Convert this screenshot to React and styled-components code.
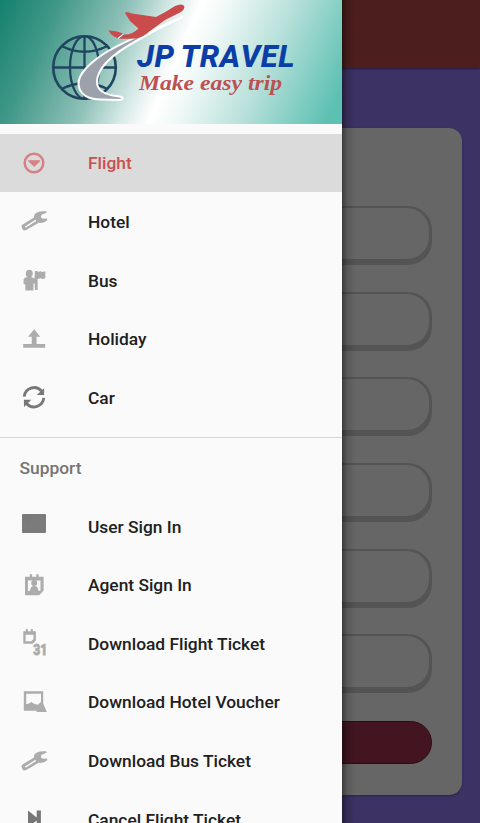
import React from 'react';
import styled, { createGlobalStyle } from 'styled-components';

const GlobalStyle = createGlobalStyle`
  * { box-sizing: border-box; }
  body { margin: 0; overflow: hidden; font-family: Roboto, "Liberation Sans", sans-serif; }
`;

const Screen = styled.div`
  position: relative;
  width: 480px;
  height: 823px;
  overflow: hidden;
  background: #3c3264;
`;

const AppBar = styled.header`
  height: 67.5px;
  background: #4c1e1e;
  box-shadow: 0 1px 2px rgba(30, 10, 40, 0.6);
`;

const SearchCard = styled.main`
  display: flex;
  flex-direction: column;
  gap: 26.6px;
  height: 667px;
  margin: 60.5px 18px 0;
  padding: 78.3px 30.5px 0;
  border-radius: 13px;
  background: #666666;
  box-shadow: 0 1px 2px rgba(20, 20, 40, 0.45);
`;

const Field = styled.div`
  flex: 0 0 59px;
  padding: 2px 2.5px 6px 2px;
  border-radius: 24px;
  background: #545454;

  &::before {
    content: '';
    display: block;
    height: 100%;
    border-radius: 22px;
    background: #666666;
  }
`;

const SearchButton = styled.div`
  flex: 0 0 43.5px;
  margin-top: 0.8px;
  border: 1px solid #2c0b17;
  border-radius: 22px;
  background: #421521;
`;

const Drawer = styled.aside`
  position: absolute;
  top: 0;
  left: 0;
  width: 342px;
  height: 823px;
  overflow: hidden;
  background: #fafafa;
`;

const DrawerShadow = styled.div`
  position: absolute;
  top: 0;
  left: 342px;
  width: 14px;
  height: 823px;
  background: linear-gradient(90deg, rgba(0, 0, 0, 0.42), rgba(0, 0, 0, 0.13) 40%, transparent);
`;

const Banner = styled.div`
  height: 123.5px;
  background: linear-gradient(114deg, #14806e 0%, #419888 15%, #8fc1b8 33%, #d9ebe8 44%, #ffffff 51%, #f2faf8 57%, #b9e1db 74%, #5cc0b2 96%);

  svg { display: block; }
`;

const Wordmark = styled.g`
  fill: #0c3ea8;
  font: italic 800 31px Roboto, sans-serif;
  font-kerning: none;
`;

const Tagline = styled.text`
  fill: #bd5053;
  font: italic 700 22px "Brush Script MT", Z003, "Liberation Serif", serif;
`;

const Menu = styled.nav`
  padding-top: ${(p) => p.$top}px;
`;

const Row = styled.div`
  display: flex;
  align-items: center;
  height: 58.67px;
  padding-left: 20px;
  background: ${(p) => (p.$active ? '#dbdbdb' : 'transparent')};
  color: ${(p) => (p.$active ? '#c9504f' : '#202020')};
  font-size: 17.36px;
  font-weight: 500;
  line-height: 20px;
  white-space: nowrap;
`;

const Label = styled.span`
  padding-top: 1px;
`;

const IconBox = styled.span`
  flex: 0 0 68px;
  height: 28px;
  color: ${(p) => p.$color};

  svg { display: block; width: 28px; height: 28px; overflow: visible; }
`;

const Divider = styled.hr`
  height: 1px;
  margin: 10px 0 0;
  border: 0;
  background: #d5d5d5;
`;

const GroupTitle = styled.h2`
  height: 58.9px;
  margin: 0;
  padding-left: 19.5px;
  color: #747474;
  font-size: 17.4px;
  font-weight: 500;
  line-height: 60.5px;
`;

const icons = {
  flight: (
    <>
      <circle cx="14" cy="14" r="9.3" fill="none" stroke="currentColor" strokeWidth="2.5" />
      <path d="M8.8 11.8h10.8L14.2 17z" stroke="currentColor" strokeWidth="1.3" strokeLinejoin="round" />
    </>
  ),
  wrench: (
    <path fillRule="evenodd" d="M1.5 19.6Q1.2 18.4 2.6 17.4L14 10.4Q13.8 6.8 17 5.4 20.8 3.7 26 4.3L27 5.6 21.6 7.8 20.8 10 22.5 11.7 27 11.5 27.3 13.3Q23.8 16.6 18.8 15.8L6.2 23Q3.6 24.3 2.5 22.2ZM5 19.5Q4.8 20.8 6.4 20.2L16.2 14 15.4 12.8Z" />
  ),
  guide: (
    <path d="M5.8 7.4Q6 3.8 9.2 3.7 12.7 3.7 12.8 7.4 12.8 9.5 11.2 11L14.4 12.4 15 5H17.6V6l3-.8 2 .8 2.7-.8v7l-2.7.8-2-.7-3 .7v11H15l-.4-7-1.2 1.2V24.6H5.3v-6L3.6 18v-4.4Q3.8 11.7 7.1 11 5.6 9.4 5.8 7.4z" />
  ),
  upload: <path d="M3.2 19h22v3.7h-22zM11.7 19V11.8H8L14.2 4.2l6.1 7.6h-3.7V19z" />,
  refresh: (
    <>
      <g fill="none" stroke="currentColor" strokeWidth="2.8">
        <path d="M4.2 13.6A9.9 9.9 0 0 1 21.5 8" />
        <path d="M23.8 14.9A9.9 9.9 0 0 1 6.5 20.5" />
      </g>
      <path d="M24.1 5.2V12h-7.4zM3.9 16.8h7.4L4 23.9z" />
    </>
  ),
  panel: (
    <>
      <rect x="2" y="2" width="24" height="19" rx="1" />
      <path d="M5 5.5l4 4M10 5.5l2 2" stroke="#707070" strokeWidth="0.7" />
    </>
  ),
  badge: (
    <>
      <path fillRule="evenodd" d="M5 5.8h4.8V3.3h2.3v2.5h4.2V3.3h2.3v2.5h5v13.7l-4.3 4.8H5.6L5 23.4zM7.9 9.5v10.2h12.6V9.5z" />
      <circle cx="14.2" cy="12" r="3" />
      <path d="M10 20q.2-5 4.2-5t4.2 5z" />
    </>
  ),
  calendar: (
    <>
      <path fillRule="evenodd" d="M3.3 2.3h2.5V.1h2v2.2h3V.1h2v2.2h3.1v9.3l-3.1 3.2H3.3zM5.6 5.8v6.5h5.7l2.1-2V5.8z" />
      <text x="13.3" y="26.2" fontFamily="Roboto, sans-serif" fontSize="15" fontWeight="900" stroke="currentColor" strokeWidth="0.8" textLength="14" lengthAdjust="spacingAndGlyphs">31</text>
    </>
  ),
  picture: (
    <path fillRule="evenodd" d="M3.8 3.2h19.4v12.3l3.7 8.5H16.5v-1.3H3.8zM6.2 5.7v10.6l2.2-.5 2.8-1.8 3.5 2 3.3.7 3-3V5.7z" />
  ),
  skip: <path d="M8 5.5l8.7 7V5.5h4.2v17h-4.2v-7L8 22.5z" />,
};

const travelItems = [
  ['Flight', 'flight', '#d48283'],
  ['Hotel', 'wrench', '#acacac'],
  ['Bus', 'guide', '#acacac'],
  ['Holiday', 'upload', '#acacac'],
  ['Car', 'refresh', '#777777'],
];

const supportItems = [
  ['User Sign In', 'panel', '#7b7b7b'],
  ['Agent Sign In', 'badge', '#acacac'],
  ['Download Flight Ticket', 'calendar', '#acacac'],
  ['Download Hotel Voucher', 'picture', '#acacac'],
  ['Download Bus Ticket', 'wrench', '#acacac'],
  ['Cancel Flight Ticket', 'skip', '#777777'],
];

function MenuRow({ item, active }) {
  const [label, icon, color] = item;
  return (
    <Row $active={active}>
      <IconBox $color={color}>
        <svg viewBox="0 0 28 28" fill="currentColor">{icons[icon]}</svg>
      </IconBox>
      <Label>{label}</Label>
    </Row>
  );
}

function Logo() {
  return (
    <svg width="342" height="124" viewBox="0 0 342 124" aria-label="JP Travel">
      <g fill="none" stroke="#20465f" strokeWidth="2.3">
        <circle cx="84.5" cy="67.5" r="31.3" strokeWidth="2.6" />
        <ellipse cx="84.5" cy="67.5" rx="14.5" ry="31.3" />
        <path d="M84.5 36v63M53 67.5h63M61.5 46q23 11.5 46 0M61.5 89q23-11.5 46 0" />
      </g>
      <path d="M183 17C150 31 124 41 105 53 91 62 78 74 78.5 84 79 95 89 99.5 101 99.5L119 100Q123.500 99.500 122.500 97.500 121 96.500 113 95.500 98 93 97 83C96 67 116 52 138 40 152 32 166 24 183 17Z" fill="#9ca1ac" stroke="#fff" strokeWidth="2" />
      <path d="M119 38.800 123.500 34.500Q132 35 138.500 28.500L130 21 125 13Q126 11.300 132 13.500L156 17Q166 12 175 6 182 2.800 184.300 6 185 9.500 180 12.500L165 20 146 34Q140 39 130 38.800Z" fill="#c94b4b" />
      <path d="M108.500 30.300 117 31.500 123 33.500 117.500 38Q111 36 108.500 30.300Z" fill="#c94b4b" />
      <path d="M118 38.500 123.300 34.200" stroke="#fff" strokeWidth="1" />
      <Wordmark>
        <text x="137" y="66.500" textLength="37" lengthAdjust="spacing">JP</text>
        <text x="180.500" y="66.500" textLength="114" lengthAdjust="spacing">TRAVEL</text>
      </Wordmark>
      <Tagline x="139" y="90" textLength="143" lengthAdjust="spacingAndGlyphs">Make easy trip</Tagline>
    </svg>
  );
}

export default function App() {
  return (
    <Screen>
      <GlobalStyle />
      <AppBar />
      <SearchCard>
        {[0, 1, 2, 3, 4, 5].map((n) => <Field key={n} />)}
        <SearchButton />
      </SearchCard>
      <DrawerShadow />
      <Drawer>
        <Banner><Logo /></Banner>
        <Menu $top={10}>
          {travelItems.map((item, i) => <MenuRow key={item[0]} item={item} active={i === 0} />)}
        </Menu>
        <Divider />
        <GroupTitle>Support</GroupTitle>
        <Menu $top={0}>
          {supportItems.map((item) => <MenuRow key={item[0]} item={item} />)}
        </Menu>
      </Drawer>
    </Screen>
  );
}
